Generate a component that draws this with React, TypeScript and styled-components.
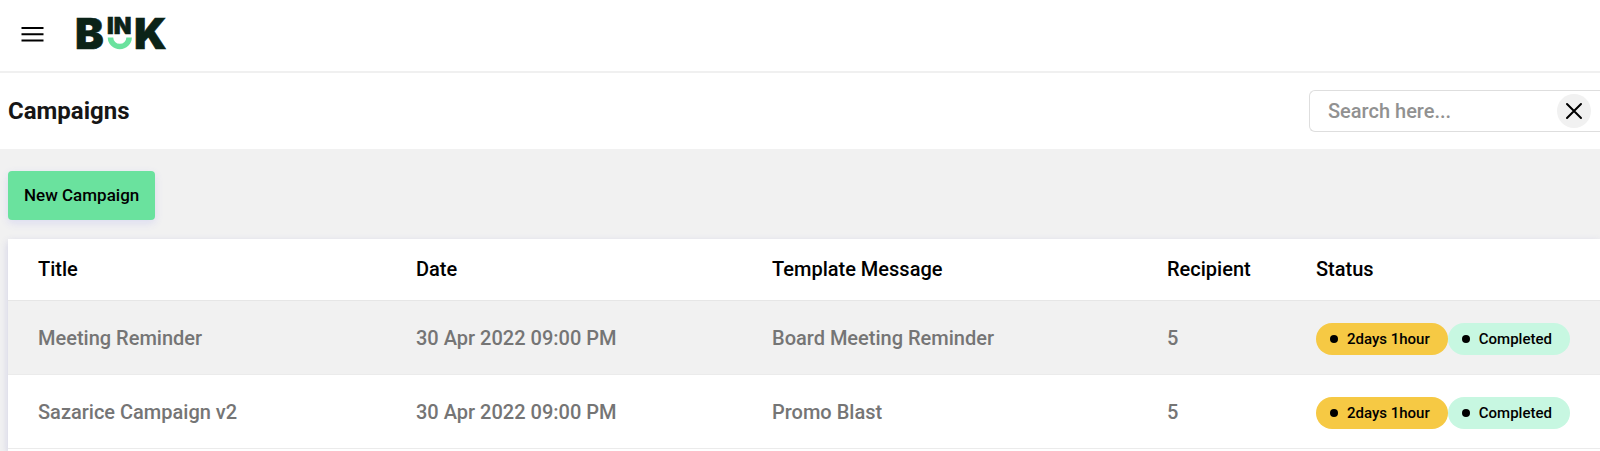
import React from "react";
import styled, { createGlobalStyle } from "styled-components";

const GlobalStyle = createGlobalStyle`
  *, *::before, *::after { box-sizing: border-box; }
  body {
    margin: 0;
    background: #f1f1f1;
    color: #000;
    font-family: Roboto, "Liberation Sans", sans-serif;
    font-weight: 500;
  }
`;

const Page = styled.div`
  display: flex;
  flex-direction: column;
  min-height: 100vh;
  overflow: hidden;
`;

const TopBar = styled.header`
  display: flex;
  align-items: center;
  gap: 30px;
  height: 73px;
  padding: 0 20px 4px;
  background: #fff;
  border-bottom: 2px solid #f0f0f0;
`;

const MenuButton = styled.button`
  display: flex;
  padding: 0;
  border: 0;
  background: none;
  cursor: pointer;
`;

const LogoLink = styled.a`
  display: flex;
  color: #0b2318;
`;

const TitleBar = styled.section`
  display: flex;
  align-items: center;
  justify-content: space-between;
  height: 76px;
  padding-left: 8px;
  background: #fff;
`;

const PageTitle = styled.h1`
  margin: 0;
  font-size: 24px;
  line-height: 32px;
  font-weight: 700;
  color: #161616;
`;

const SearchBox = styled.form`
  display: flex;
  align-items: center;
  width: 291px;
  height: 42px;
  padding: 0 9px 0 18px;
  border: 1px solid #dedede;
  border-right: 0;
  border-radius: 6px 0 0 6px;
`;

const SearchInput = styled.input`
  flex: 1;
  min-width: 0;
  padding: 0;
  border: 0;
  outline: 0;
  background: none;
  font: inherit;
  font-size: 20px;
  line-height: 24px;
  &::placeholder { color: #919191; opacity: 1; }
`;

const ClearButton = styled.button`
  display: flex;
  align-items: center;
  justify-content: center;
  width: 34px;
  height: 34px;
  padding: 0;
  border: 0;
  border-radius: 50%;
  background: #f1f1f1;
  cursor: pointer;
`;

const Content = styled.main`
  flex: 1;
  display: flex;
  flex-direction: column;
  align-items: flex-start;
  gap: 19px;
  padding: 22px 0 0 8px;
`;

const PrimaryButton = styled.button`
  height: 49px;
  padding: 0 16px 2px;
  border: 0;
  border-radius: 4px;
  background: #6ae29e;
  box-shadow: 0 3px 8px rgba(90, 90, 240, 0.14);
  color: #000;
  font: inherit;
  font-size: 17px;
  line-height: 24px;
  cursor: pointer;
`;

const Card = styled.div`
  flex: 1;
  align-self: stretch;
  background: #fff;
  box-shadow: 0 3px 8px rgba(70, 70, 180, 0.2);
`;

const CampaignTable = styled.table`
  width: 100%;
  table-layout: fixed;
  border-collapse: separate;
  border-spacing: 0;
  font-size: 20px;
  line-height: 24px;
`;

const Column = styled.col<{ $width: number }>`
  width: ${({ $width }) => $width}px;
`;

const HeadCell = styled.th`
  height: 62px;
  padding: 0 0 2px 30px;
  border-bottom: 1px solid #e6e6e6;
  text-align: left;
  font-weight: 500;
`;

const Row = styled.tr<{ $shaded: boolean }>`
  background: ${({ $shaded }) => ($shaded ? "#f1f1f1" : "#fff")};
`;

const Cell = styled.td`
  height: 74px;
  padding: 0 0 0 30px;
  border-bottom: 1px solid #ebebeb;
  color: #757575;
`;

const Pills = styled.div`
  display: flex;
  padding-top: 3px;
`;

const Pill = styled.span<{ $color: string }>`
  display: flex;
  align-items: center;
  gap: 9px;
  height: 32px;
  padding: 0 18px 0 14px;
  border-radius: 16px;
  background: ${({ $color }) => $color};
  color: #000;
  font-size: 15px;
  line-height: 20px;
  white-space: nowrap;
  &::before {
    content: "";
    width: 8px;
    height: 8px;
    border-radius: 50%;
    background: #000;
  }
`;

const columns = [
  { label: "Title", width: 378 },
  { label: "Date", width: 356 },
  { label: "Template Message", width: 395 },
  { label: "Recipient", width: 149 },
  { label: "Status", width: 314 },
];

const campaigns = [
  { title: "Meeting Reminder", date: "30 Apr 2022 09:00 PM", template: "Board Meeting Reminder", recipients: 5 },
  { title: "Sazarice Campaign v2", date: "30 Apr 2022 09:00 PM", template: "Promo Blast", recipients: 5 },
];

function MenuIcon() {
  return (
    <svg width="24" height="24" viewBox="0 0 24 24" aria-hidden="true">
      <path d="M1.500 5.900h22M1.500 12.200h22M1.500 18.400h22" stroke="#000" strokeWidth="2" />
    </svg>
  );
}

function Logo() {
  return (
    <svg width="98" height="60" viewBox="0 0 98 60" role="img" aria-label="Bink">
      <g
        fill="currentColor"
        stroke="currentColor"
        strokeWidth="0.6"
        fontFamily="Inter, sans-serif"
        fontWeight="900"
      >
        <text x="1" y="45" fontSize="43">B</text>
        <text x="33" y="30" fontSize="23">IN</text>
        <text x="60" y="45" fontSize="43">K</text>
      </g>
      <path d="M36.500 33.500a9.300 9 0 0 0 18.600 0" fill="none" stroke="#6ae29e" strokeWidth="5.500" />
    </svg>
  );
}

function CloseIcon() {
  return (
    <svg width="18" height="18" viewBox="0 0 18 18" aria-hidden="true">
      <path d="M2 2l14 14M16 2L2 16" stroke="#000" strokeWidth="2" strokeLinecap="round" />
    </svg>
  );
}

export default function App() {
  return (
    <Page>
      <GlobalStyle />
      <TopBar>
        <MenuButton type="button" aria-label="Open menu">
          <MenuIcon />
        </MenuButton>
        <LogoLink href="#">
          <Logo />
        </LogoLink>
      </TopBar>
      <TitleBar>
        <PageTitle>Campaigns</PageTitle>
        <SearchBox role="search">
          <SearchInput type="text" aria-label="Search campaigns" placeholder="Search here..." />
          <ClearButton type="reset" aria-label="Clear search">
            <CloseIcon />
          </ClearButton>
        </SearchBox>
      </TitleBar>
      <Content>
        <PrimaryButton type="button">New Campaign</PrimaryButton>
        <Card>
          <CampaignTable>
            <colgroup>
              {columns.map((c) => (
                <Column key={c.label} $width={c.width} />
              ))}
            </colgroup>
            <thead>
              <tr>
                {columns.map((c) => (
                  <HeadCell key={c.label} scope="col">{c.label}</HeadCell>
                ))}
              </tr>
            </thead>
            <tbody>
              {campaigns.map((c, i) => (
                <Row key={c.title} $shaded={i % 2 === 0}>
                  <Cell>{c.title}</Cell>
                  <Cell>{c.date}</Cell>
                  <Cell>{c.template}</Cell>
                  <Cell>{c.recipients}</Cell>
                  <Cell>
                    <Pills>
                      <Pill $color="#f6c944">2days 1hour</Pill>
                      <Pill $color="#c7f7e1">Completed</Pill>
                    </Pills>
                  </Cell>
                </Row>
              ))}
            </tbody>
          </CampaignTable>
        </Card>
      </Content>
    </Page>
  );
}
